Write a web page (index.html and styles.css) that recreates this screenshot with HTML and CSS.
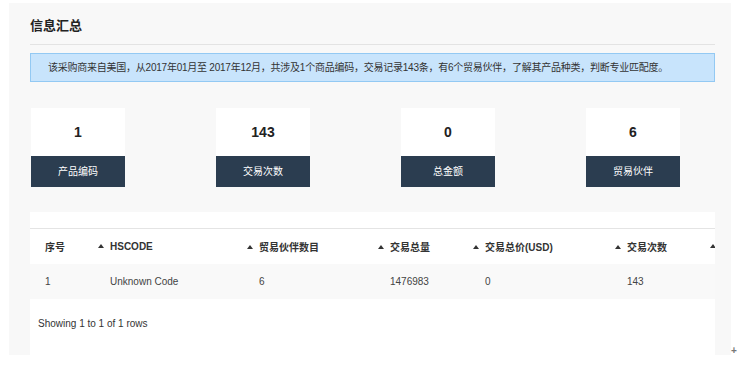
FILE: index.html
```html
<!DOCTYPE html>
<html>
<head>
    <meta charset="utf-8">
    <title>信息汇总</title>
    <link rel="stylesheet" href="styles.css">
</head>
<body>
    <div class="panel">
        <h2 class="title">信息汇总</h2>

        <div class="alert">该采购商来自美国，从2017年01月至 2017年12月，共涉及1个商品编码，交易记录143条，有6个贸易伙伴，了解其产品种类，判断专业匹配度。</div>

        <div class="cards">
            <div class="card">
                <div class="card-num">1</div>
                <div class="card-label">产品编码</div>
            </div>
            <div class="card">
                <div class="card-num">143</div>
                <div class="card-label">交易次数</div>
            </div>
            <div class="card">
                <div class="card-num">0</div>
                <div class="card-label">总金额</div>
            </div>
            <div class="card">
                <div class="card-num">6</div>
                <div class="card-label">贸易伙伴</div>
            </div>
        </div>

        <div class="table-box">
            <div class="table-scroll">
                <table class="data-table">
                    <colgroup>
                        <col class="c1"><col class="c2"><col class="c3"><col class="c4"><col class="c5"><col class="c6"><col class="c7">
                    </colgroup>
                    <thead>
                        <tr>
                            <th>序号</th>
                            <th><span class="sort">HSCODE</span></th>
                            <th><span class="sort">贸易伙伴数目</span></th>
                            <th><span class="sort">交易总量</span></th>
                            <th><span class="sort">交易总价(USD)</span></th>
                            <th><span class="sort">交易次数</span></th>
                            <th><span class="sort"></span></th>
                        </tr>
                    </thead>
                    <tbody>
                        <tr>
                            <td>1</td>
                            <td>Unknown Code</td>
                            <td>6</td>
                            <td>1476983</td>
                            <td>0</td>
                            <td>143</td>
                            <td></td>
                        </tr>
                    </tbody>
                </table>
            </div>
            <div class="table-footer">Showing 1 to 1 of 1 rows</div>
        </div>
    </div>
    <div class="cursor">+</div>
</body>
</html>
```

FILE: styles.css
```css
body {
    margin: 0;
    background-color: #fff;
    font-family: "Liberation Sans", Arial, "Noto Sans CJK SC", sans-serif;
    color: #333;
    position: relative;
}

.panel {
    width: 722px;
    height: 352px;
    margin: 3px 0 0 9px;
    padding: 0 16px 0 21px;
    box-sizing: border-box;
    background-color: #f8f8f8;
    overflow: hidden;
}

.title {
    margin: 0;
    padding: 13px 0 8px 0;
    font-size: 13px;
    line-height: 20px;
    font-weight: bold;
    color: #222;
    border-bottom: 1px solid #e3e3e3;
}

.alert {
    margin-top: 8px;
    height: 27px;
    line-height: 27px;
    padding: 0 17px;
    font-size: 10px;
    letter-spacing: -0.24px;
    color: #333;
    background-color: #c8e4fc;
    border: 1px solid #93c9f3;
    white-space: nowrap;
}

.cards {
    display: flex;
    justify-content: space-between;
    margin-top: 26px;
    padding: 0 35px 0 1px;
}

.card {
    width: 94px;
    text-align: center;
}

.card-num {
    height: 48px;
    line-height: 48px;
    background-color: #fff;
    font-size: 14px;
    font-weight: bold;
    color: #222;
}

.card-label {
    height: 31px;
    line-height: 31px;
    background-color: #2b3d50;
    color: #fff;
    font-size: 10px;
}

.table-box {
    margin-top: 25px;
    height: 143px;
    background-color: #fff;
    padding-top: 16px;
    box-sizing: border-box;
}

.table-scroll {
    overflow: hidden;
}

.data-table {
    table-layout: fixed;
    width: 800px;
    border-collapse: collapse;
    font-size: 10px;
}

.c1 { width: 65px; }
.c2 { width: 149px; }
.c3 { width: 131px; }
.c4 { width: 95px; }
.c5 { width: 142px; }
.c6 { width: 95px; }
.c7 { width: 123px; }

.data-table th,
.data-table td {
    text-align: left;
    padding: 0 0 0 15px;
    white-space: nowrap;
    overflow: hidden;
}

.data-table th {
    height: 35px;
    border-top: 1px solid #e4e4e4;
    font-weight: bold;
    color: #333;
}

.data-table td {
    height: 35px;
    background-color: #f9f9f9;
    color: #444;
}

.sort::before {
    content: "";
    display: inline-block;
    margin: 0 6px 2px -12px;
    border-left: 3px solid transparent;
    border-right: 3px solid transparent;
    border-bottom: 4px solid #333;
    vertical-align: middle;
}

.table-footer {
    padding: 18px 0 0 8px;
    font-size: 10px;
    line-height: 14px;
    color: #333;
}

.cursor {
    position: absolute;
    left: 731px;
    top: 345px;
    font-size: 10px;
    font-weight: bold;
    color: #777;
}
```
